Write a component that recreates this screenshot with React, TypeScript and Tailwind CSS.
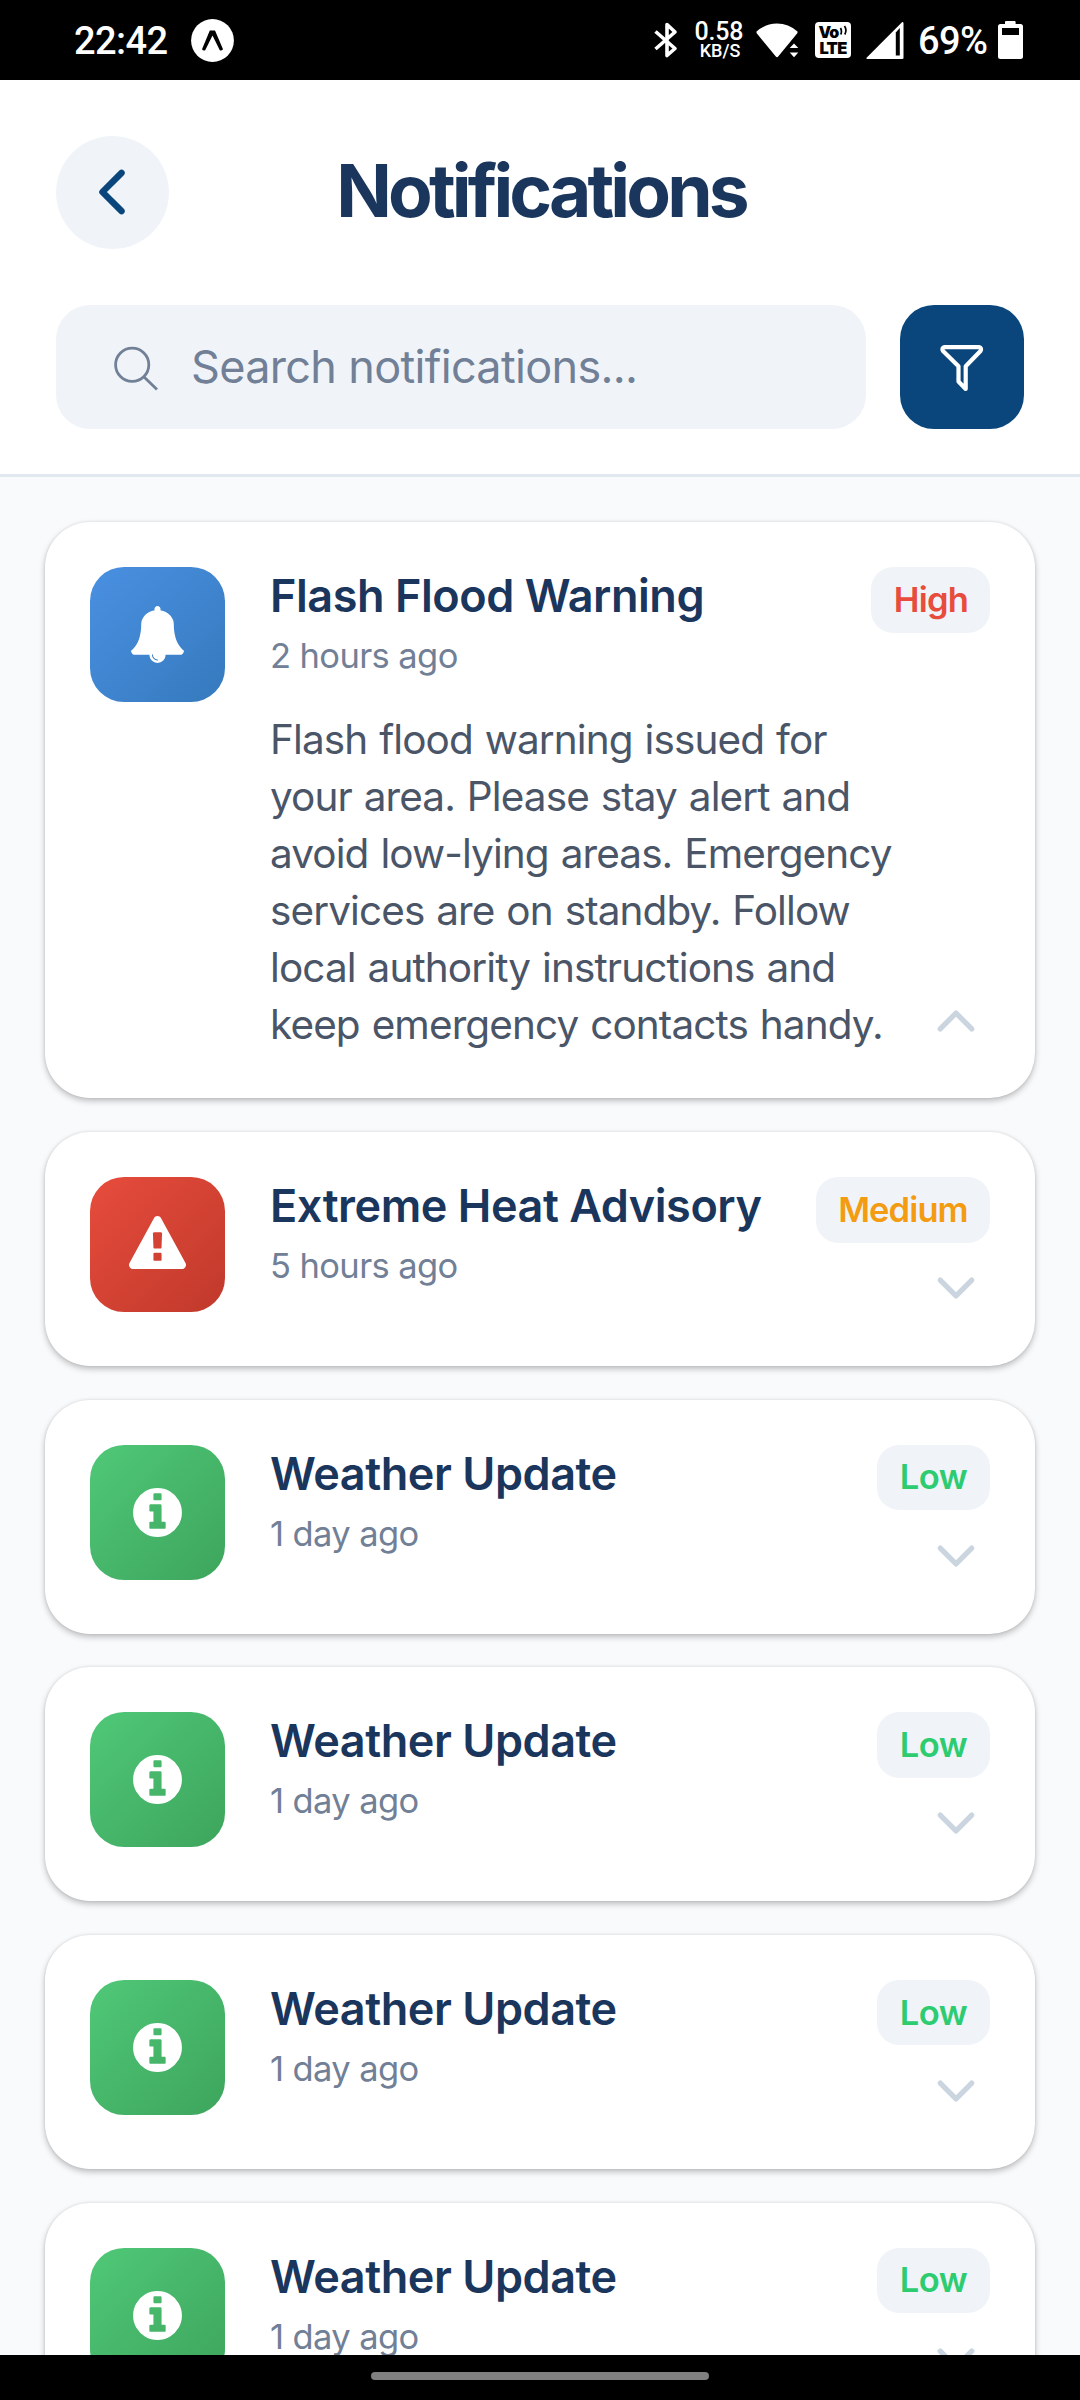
import type { ReactNode } from 'react';

type Kind = 'flood' | 'heat' | 'info';
type Priority = 'High' | 'Medium' | 'Low';

interface Item {
  kind: Kind;
  title: string;
  time: string;
  priority: Priority;
  message?: string;
}

const items: Item[] = [
  {
    kind: 'flood',
    title: 'Flash Flood Warning',
    time: '2 hours ago',
    priority: 'High',
    message:
      'Flash flood warning issued for your area. Please stay alert and avoid low-lying areas. Emergency services are on standby. Follow local authority instructions and keep emergency contacts handy.',
  },
  { kind: 'heat', title: 'Extreme Heat Advisory', time: '5 hours ago', priority: 'Medium' },
  { kind: 'info', title: 'Weather Update', time: '1 day ago', priority: 'Low' },
  { kind: 'info', title: 'Weather Update', time: '1 day ago', priority: 'Low' },
  { kind: 'info', title: 'Weather Update', time: '1 day ago', priority: 'Low' },
  { kind: 'info', title: 'Weather Update', time: '1 day ago', priority: 'Low' },
];

const tileStyles: Record<Kind, string> = {
  flood: 'from-[#4a90e2] to-[#357abd]',
  heat: 'from-[#e74c3c] to-[#c0392b]',
  info: 'from-[#50c878] to-[#3da55c]',
};

const badgeStyles: Record<Priority, string> = {
  High: 'w-[119px] pl-px tracking-[-0.800px] text-[#e74c3c]',
  Medium: 'w-[174px] tracking-[-0.900px] text-[#f39c12]',
  Low: 'w-[113px] tracking-[-0.400px] text-[#2ecc71]',
};

const tileIcons: Record<Kind, ReactNode> = {
  flood: (
    <svg width="57" height="57" viewBox="0 0 1792 1792" fill="white">
      <path d="M912 1696q0-16-16-16-59 0-101.500-42.500t-42.500-101.500q0-16-16-16t-16 16q0 73 51.500 124.500t124.500 51.500q16 0 16-16zM1728 1408q0 52-38 90t-90 38h-448q0 106-75 181t-181 75-181-75-75-181h-448q-52 0-90-38t-38-90q50-42 91-88t85-119.500 74.500-158.500 50-206 19.500-260q0-152 117-282.500t307-158.500q-8-19-8-39 0-40 28-68t68-28 68 28 28 68q0 20-8 39 190 28 307 158.500t117 282.500q0 139 19.500 260t50 206 74.500 158.500 85 119.500 91 88z" />
    </svg>
  ),
  heat: (
    <svg width="57" height="57" viewBox="0 0 1792 1792" fill="white">
      <path d="M1024 1375v-190q0-14-9.500-23.500t-22.500-9.500h-192q-13 0-22.500 9.500t-9.500 23.500v190q0 14 9.500 23.500t22.500 9.500h192q13 0 22.500-9.500t9.500-23.500zM1022 1001l18-459q0-12-10-19-13-11-24-11h-220q-11 0-24 11-10 7-10 21l17 457q0 10 10 16.500t24 6.500h185q14 0 23.500-6.500t10.500-16.500zM1008 67l768 1408q35 63-2 126-17 29-46.500 46t-63.500 17h-1536q-34 0-63.500-17t-46.500-46q-37-63-2-126l768-1408q17-31 47-49t65-18 65 18 47 49z" />
    </svg>
  ),
  info: (
    <svg width="57" height="57" viewBox="0 0 1792 1792" fill="white">
      <path d="M1152 1376v-160q0-14-9-23t-23-9h-96v-512q0-14-9-23t-23-9h-320q-14 0-23 9t-9 23v160q0 14 9 23t23 9h96v320h-96q-14 0-23 9t-9 23v160q0 14 9 23t23 9h448q14 0 23-9t9-23zM1024 480v-160q0-14-9-23t-23-9h-192q-14 0-23 9t-9 23v160q0 14 9 23t23 9h192q14 0 23-9t9-23zM1664 896q0 209-103 385.500t-279.500 279.500-385.500 103-385.500-103-279.500-279.500-103-385.500 103-385.500 279.500-279.500 385.500-103 385.500 103 279.500 279.500 103 385.500z" />
    </svg>
  ),
};

function StatusBar() {
  return (
    <div className="flex h-20 shrink-0 items-center bg-black pr-[57px] pl-[74px] font-['Roboto',sans-serif] font-medium text-white">
      <span className="w-[96px] pt-px text-[38px] leading-[46px] tracking-[-0.6px] whitespace-nowrap">22:42</span>
      <svg className="ml-[21px]" width="43" height="43" viewBox="0 0 43 43">
        <circle cx="21.500" cy="21.500" r="21.400" fill="white" />
        <path d="M18.800 11.500H24L32 30.200Q30.500 32.200 28.800 31.200L21.500 16.600L14.200 31.200Q12.200 32 11 30.200Z" fill="black" />
      </svg>
      <div className="flex-1" />
      <svg width="24" height="38" viewBox="0 0 24 38" fill="none" stroke="white" strokeWidth="3.600" strokeLinejoin="round">
        <path d="M1.500 10.500L21 27.500L13 34.500V3.500L21 11L1.500 28" />
      </svg>
      <div className="ml-[15px] flex w-[52px] flex-col items-center pt-px">
        <span className="text-[25px] leading-[20px] tracking-[-0.2px]">0.58</span>
        <span className="pl-[2px] text-[18px] leading-[17px]">KB/S</span>
      </div>
      <svg className="ml-[11px]" width="43" height="38" viewBox="0 0 43 38" fill="white">
        <path d="M0.500 10.500Q9.500 2.800 21 2.600Q32.500 2.800 41.500 10.500L41.500 12L22.200 35.500Q21 37 19.800 35.500L0.500 12Z" />
        <path d="M38 22.500L42.300 27H33.700ZM38 36.200L42.300 31.500H33.700Z" />
      </svg>
      <div className="ml-4 flex h-9 w-9 flex-col items-center justify-center rounded-[4px] bg-white font-['Inter',sans-serif] font-black text-black">
        <div className="flex h-[16px] items-center">
          <span className="text-[16px] leading-[16px] tracking-[-0.8px]">Vo</span>
          <svg width="9" height="11" viewBox="0 0 9 11" fill="none" stroke="black" strokeWidth="1.700" className="mb-[4px]">
            <path d="M1.500 3Q3.200 6 1.800 9.500M5.500 1Q8.200 5 5.800 9.500" />
          </svg>
        </div>
        <span className="text-[16.500px] leading-[16px] tracking-[-0.7px]">LTE</span>
      </div>
      <svg className="ml-[15px]" width="38" height="38" viewBox="0 0 38 38">
        <path d="M0.300 37L36 1.200Q37.500 0.800 37.500 2.500V36.800Q37.500 38 36.200 38H0.800Z" fill="white" />
        <path d="M29.800 11.500L33.800 7V34.400H29.800Z" fill="black" />
      </svg>
      <span className="ml-[14px] w-[70px] pt-px text-[38px] leading-[46px] tracking-[-0.6px] whitespace-nowrap">69%</span>
      <svg className="ml-[10px]" width="25" height="38" viewBox="0 0 25 38">
        <path d="M7 1Q7 0 8 0H16.600Q17.600 0 17.600 1V3H22.500Q25 3 25 5.500V35.500Q25 38 22.500 38H2.500Q0 38 0 35.500V5.500Q0 3 2.500 3H7Z" fill="white" />
        <path d="M4 7H21V14H4Z" fill="black" />
      </svg>
    </div>
  );
}

function Header() {
  return (
    <header className="shrink-0 border-b-[3px] border-[#e2e8f0] bg-white px-14 pt-14 pb-[45px]">
      <div className="grid h-[113px] grid-cols-[113px_1fr_113px] items-center">
        <button className="flex h-[113px] w-[113px] items-center justify-center rounded-full bg-[#f0f4f9] pr-[2px] pb-px">
          <svg width="68" height="68" viewBox="0 0 512 512" fill="none" stroke="#0a467b" strokeWidth="48" strokeLinecap="round" strokeLinejoin="round">
            <path d="M328 112L184 256l144 144" />
          </svg>
        </button>
        <h1 className="pb-[3px] pl-[2px] text-center text-[73px] leading-[90px] font-bold tracking-[-3.900px] text-[#1a365d]">
          Notifications
        </h1>
      </div>
      <div className="mt-14 flex h-[124px] gap-[34px]">
        <div className="flex flex-1 items-center rounded-[34px] bg-[#f0f4f9] pl-[56px]">
          <svg width="48" height="48" viewBox="0 0 48 48" fill="none" stroke="#718096" strokeWidth="2.800">
            <circle cx="20.200" cy="21.700" r="16.600" />
            <path d="M31.800 33.800L45 46.500" />
          </svg>
          <span className="ml-[31px] text-[45px] leading-[54px] tracking-[-0.680px] whitespace-nowrap text-[#718096]">
            Search notifications...
          </span>
        </div>
        <button className="flex h-[124px] w-[124px] items-center justify-center rounded-[34px] bg-[#0a467b]">
          <svg width="46" height="50" viewBox="0 0 46 50" fill="none" stroke="white" strokeWidth="4.200" strokeLinejoin="round">
            <path d="M5.500 5.100H40Q43.200 5.800 41.500 9L26.700 24.200V47L19.500 39.500V24.200L4 9Q2.300 5.800 5.500 5.100Z" />
          </svg>
        </button>
      </div>
    </header>
  );
}

function Card({ item }: { item: Item }) {
  const expanded = Boolean(item.message);
  return (
    <article className="flex shrink-0 rounded-[45px] bg-white p-[45px] shadow-[0_3px_6px_rgba(0,0,0,0.24),0_0_3px_rgba(0,0,0,0.1)]">
      <div className={`flex h-[135px] w-[135px] shrink-0 items-center justify-center rounded-[34px] bg-linear-to-br ${tileStyles[item.kind]}`}>
        {tileIcons[item.kind]}
      </div>
      <div className={`ml-[45px] flex flex-1 flex-col ${expanded ? '' : 'h-[143.900px]'}`}>
        <div className="flex h-[111px] shrink-0 items-start justify-between">
          <div>
            <h2 className="text-[45px] leading-[57px] font-semibold tracking-[-0.450px] whitespace-nowrap text-[#1a365d]">{item.title}</h2>
            <p className="mt-[10px] text-[34.500px] leading-[44px] tracking-[-0.600px] text-[#718096]">{item.time}</p>
          </div>
          <span
            className={`flex h-[65.500px] items-center justify-center rounded-[22px] bg-[#f0f4f9] text-[34.500px] leading-[42px] font-semibold ${badgeStyles[item.priority]}`}
          >
            {item.priority}
          </span>
        </div>
        <div className="flex min-h-0 flex-1 items-end">
          {item.message && (
            <p className="mt-[33px] -mr-14 w-[630px] text-[40.500px] leading-[57px] tracking-[-0.900px] [word-spacing:1.4px] text-[#4a5568]">
              {item.message}
            </p>
          )}
          <svg
            className={`mr-[6px] ml-auto shrink-0 ${expanded ? 'mb-1' : 'mb-[5px]'}`}
            width="56"
            height="56"
            viewBox="0 0 512 512"
            fill="none"
            stroke="#cbd5e0"
            strokeWidth="48"
            strokeLinecap="round"
            strokeLinejoin="round"
          >
            <path d={expanded ? 'M112 328l144-144 144 144' : 'M112 184l144 144 144-144'} />
          </svg>
        </div>
      </div>
    </article>
  );
}

export default function App() {
  return (
    <div className="flex h-[2400px] w-[1080px] flex-col overflow-hidden bg-[#f9fafc] font-['Inter',sans-serif]">
      <StatusBar />
      <Header />
      <main className="flex min-h-0 flex-1 flex-col gap-[33.750px] overflow-hidden px-[45px] pt-[45.300px]">
        {items.map((item, i) => (
          <Card key={i} item={item} />
        ))}
      </main>
      <div className="flex h-[45px] shrink-0 justify-center bg-black pt-[17px]">
        <div className="h-2 w-[338px] rounded-full bg-[#808080]" />
      </div>
    </div>
  );
}
